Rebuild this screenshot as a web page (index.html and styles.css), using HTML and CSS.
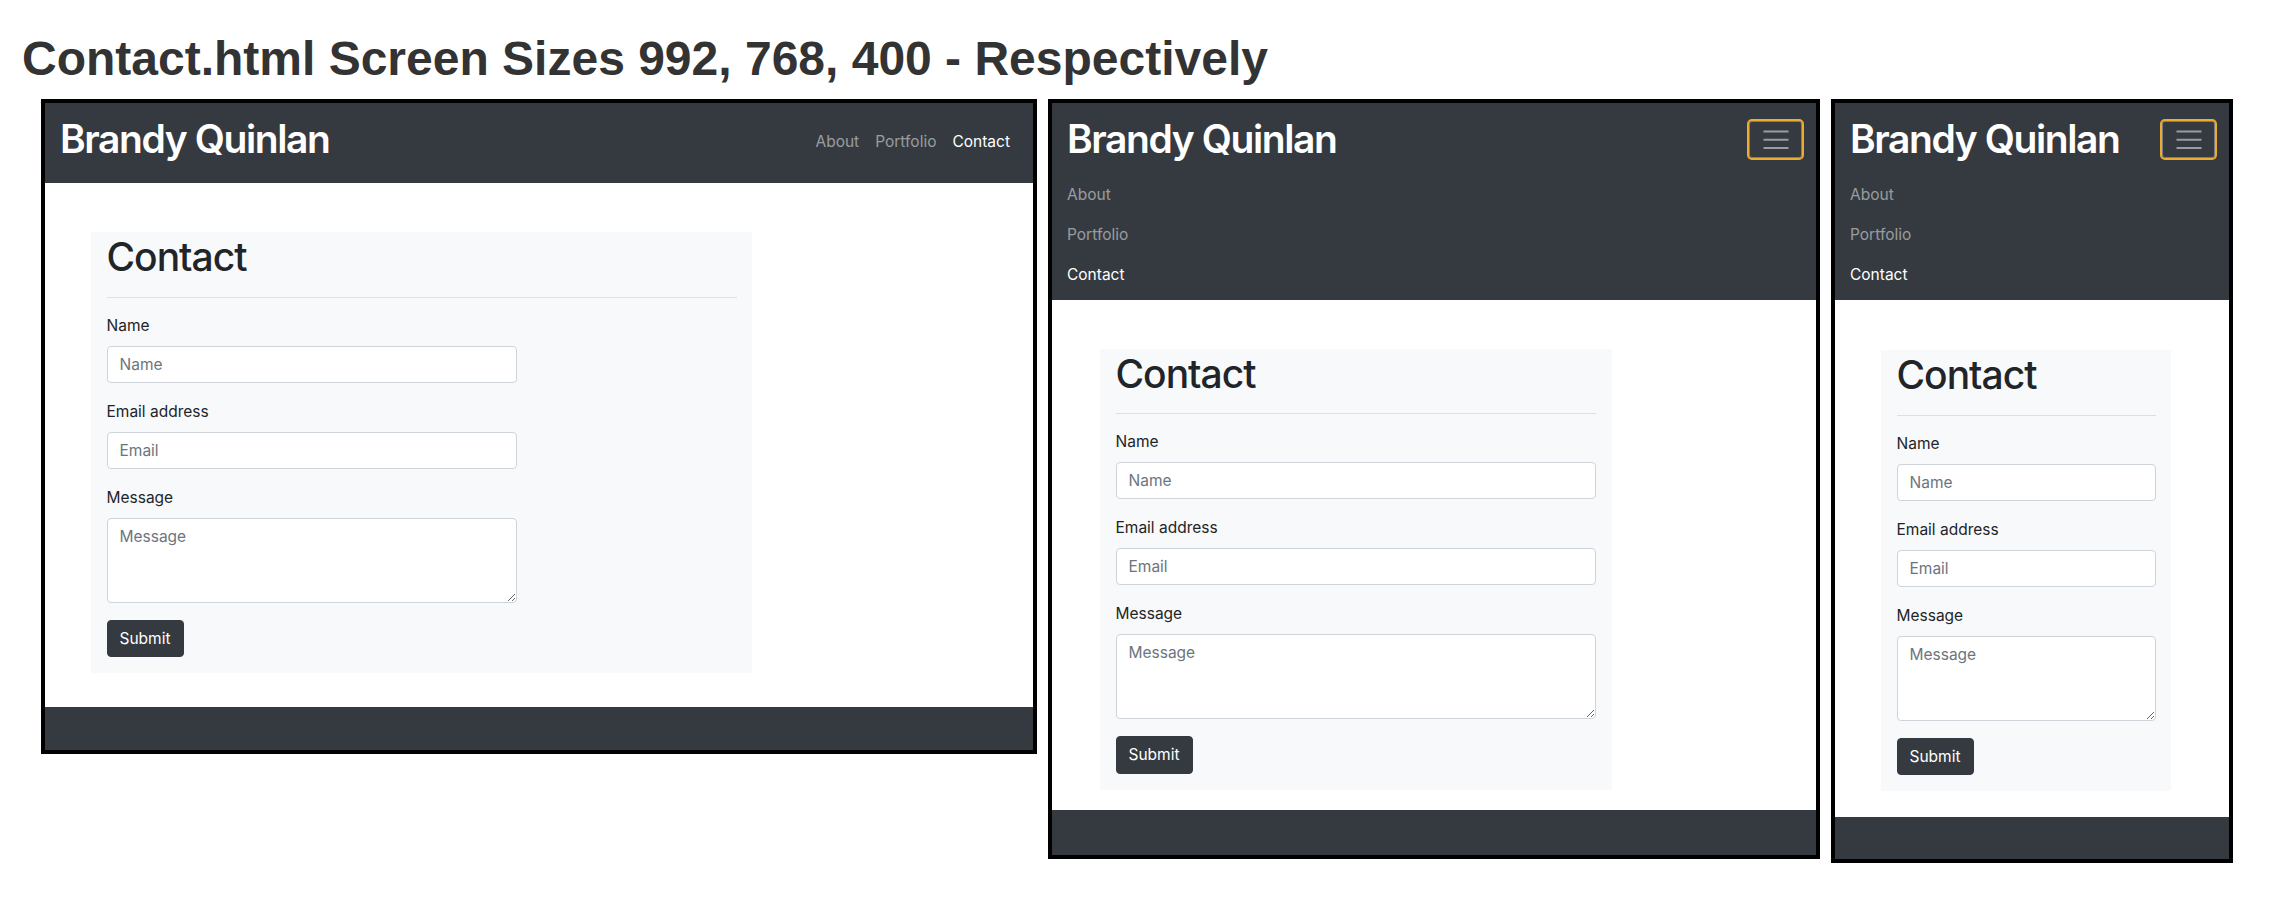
FILE: index.html
```html
<!DOCTYPE html>
<html lang="en">
<head>
<meta charset="utf-8">
<title>Contact.html Screen Sizes</title>
<link rel="stylesheet" href="styles.css">
</head>
<body>
<h1 class="page-title">Contact.html Screen Sizes 992, 768, 400 - Respectively</h1>
<div class="shots">

  <div class="shot shot-lg">
    <nav class="navbar navbar-wide">
      <a class="brand" href="#">Brandy Quinlan</a>
      <ul class="nav-row">
        <li><a class="nav-link" href="#">About</a></li>
        <li><a class="nav-link" href="#">Portfolio</a></li>
        <li><a class="nav-link active" href="#">Contact</a></li>
      </ul>
    </nav>
    <main class="page-body">
      <section class="card">
        <h2 class="card-title">Contact</h2>
        <hr class="divider">
        <form class="contact-form">
          <div class="form-group">
            <label class="form-label">Name</label>
            <input class="form-control" type="text" placeholder="Name">
          </div>
          <div class="form-group">
            <label class="form-label">Email address</label>
            <input class="form-control" type="email" placeholder="Email">
          </div>
          <div class="form-group">
            <label class="form-label">Message</label>
            <textarea class="form-control form-textarea" placeholder="Message"></textarea>
          </div>
          <button class="btn" type="button">Submit</button>
        </form>
      </section>
    </main>
    <footer class="site-footer"></footer>
  </div>

  <div class="shot shot-md">
    <nav class="navbar navbar-collapsed">
      <div class="navbar-top">
        <a class="brand" href="#">Brandy Quinlan</a>
        <button class="toggler" type="button" aria-label="Toggle navigation">
          <svg class="toggler-icon" width="26" height="20" viewBox="0 0 26 20"><path d="M0.5 1.5H25.5M0.5 9.75H25.5M0.5 18H25.5" stroke="rgba(255,255,255,0.5)" stroke-width="1.8" fill="none"/></svg>
        </button>
      </div>
      <ul class="nav-stack">
        <li><a class="nav-link" href="#">About</a></li>
        <li><a class="nav-link" href="#">Portfolio</a></li>
        <li><a class="nav-link active" href="#">Contact</a></li>
      </ul>
    </nav>
    <main class="page-body">
      <section class="card">
        <h2 class="card-title">Contact</h2>
        <hr class="divider">
        <form class="contact-form">
          <div class="form-group">
            <label class="form-label">Name</label>
            <input class="form-control" type="text" placeholder="Name">
          </div>
          <div class="form-group">
            <label class="form-label">Email address</label>
            <input class="form-control" type="email" placeholder="Email">
          </div>
          <div class="form-group">
            <label class="form-label">Message</label>
            <textarea class="form-control form-textarea" placeholder="Message"></textarea>
          </div>
          <button class="btn" type="button">Submit</button>
        </form>
      </section>
    </main>
    <footer class="site-footer"></footer>
  </div>

  <div class="shot shot-sm">
    <nav class="navbar navbar-collapsed">
      <div class="navbar-top">
        <a class="brand" href="#">Brandy Quinlan</a>
        <button class="toggler" type="button" aria-label="Toggle navigation">
          <svg class="toggler-icon" width="26" height="20" viewBox="0 0 26 20"><path d="M0.5 1.5H25.5M0.5 9.75H25.5M0.5 18H25.5" stroke="rgba(255,255,255,0.5)" stroke-width="1.8" fill="none"/></svg>
        </button>
      </div>
      <ul class="nav-stack">
        <li><a class="nav-link" href="#">About</a></li>
        <li><a class="nav-link" href="#">Portfolio</a></li>
        <li><a class="nav-link active" href="#">Contact</a></li>
      </ul>
    </nav>
    <main class="page-body">
      <section class="card">
        <h2 class="card-title">Contact</h2>
        <hr class="divider">
        <form class="contact-form">
          <div class="form-group">
            <label class="form-label">Name</label>
            <input class="form-control" type="text" placeholder="Name">
          </div>
          <div class="form-group">
            <label class="form-label">Email address</label>
            <input class="form-control" type="email" placeholder="Email">
          </div>
          <div class="form-group">
            <label class="form-label">Message</label>
            <textarea class="form-control form-textarea" placeholder="Message"></textarea>
          </div>
          <button class="btn" type="button">Submit</button>
        </form>
      </section>
    </main>
    <footer class="site-footer"></footer>
  </div>

</div>
</body>
</html>
```
FILE: styles.css
```css
* { box-sizing: border-box; }

html, body {
  margin: 0;
  background: #ffffff;
}

body {
  font-family: Inter, "Noto Sans", sans-serif;
  color: #212529;
}

.page-title {
  margin: 0 0 16px;
  padding: 35px 0 0 22px;
  font-family: "Liberation Sans", Arial, sans-serif;
  font-weight: 700;
  font-size: 48px;
  line-height: 48px;
  color: #333333;
}

.shots {
  display: flex;
  align-items: flex-start;
  gap: 11px;
  padding-left: 41px;
}

.shot {
  display: flex;
  flex-direction: column;
  border: 4px solid #000;
  background: #fff;
}

.shot-lg { width: 996px; }
.shot-md { width: 772px; }
.shot-sm { width: 402px; }

/* navbar */
.navbar {
  background: #343a40;
}

.brand {
  font-size: 39px;
  line-height: 47px;
  font-weight: 600;
  letter-spacing: -1.4px;
  color: #fff;
  text-decoration: none;
  white-space: nowrap;
}

.nav-link {
  display: block;
  font-size: 15.5px;
  line-height: 24px;
  color: rgba(255, 255, 255, 0.5);
  text-decoration: none;
}

.nav-link.active { color: #fff; }

.navbar-wide {
  display: flex;
  align-items: flex-start;
  justify-content: space-between;
  height: 80px;
  padding: 12px 15px 0 15px;
}

.nav-row {
  display: flex;
  list-style: none;
  margin: 15px 0 0;
  padding: 0;
}

.nav-row .nav-link { padding: 0 8px; }

.navbar-collapsed {
  padding: 12px 12px 5.5px 15px;
}

.navbar-top {
  display: flex;
  align-items: center;
  justify-content: space-between;
}

.toggler {
  display: flex;
  align-items: center;
  justify-content: center;
  width: 57px;
  height: 41px;
  margin-top: 2px;
  padding: 0;
  background: transparent;
  border: 2px solid #eeac2e;
  border-radius: 5px;
  box-shadow: inset 0 0 0 1px rgba(255, 255, 255, 0.35);
}

.toggler-icon { display: block; }

.nav-stack {
  list-style: none;
  margin: 12.5px 0 0;
  padding: 0;
}

.nav-stack .nav-link { padding: 8px 0; }

/* body */
.page-body { display: flex; }

.shot-lg .page-body { padding: 49px 0 34px 46px; }
.shot-md .page-body { padding: 48.5px 0 20.5px 48px; }
.shot-sm .page-body { padding: 50px 0 26px 46px; }

.card {
  background: #f8f9fa;
  padding: 2px 15.5px 16px;
}

.shot-lg .card { width: 661px; }
.shot-md .card { width: 511.5px; }
.shot-sm .card { width: 290px; }

.card-title {
  margin: 0;
  font-size: 39px;
  line-height: 46.8px;
  font-weight: 500;
  letter-spacing: -1px;
  color: #212529;
}

.divider {
  margin: 16px 0;
  border: 0;
  border-top: 1px solid rgba(0, 0, 0, 0.1);
}

.form-group { margin-bottom: 17px; }

.form-label {
  display: block;
  margin-bottom: 8px;
  font-size: 15.5px;
  line-height: 24px;
  color: #212529;
}

.form-control {
  display: block;
  width: 100%;
  height: 37px;
  margin: 0;
  padding: 6px 12px;
  font-family: inherit;
  font-size: 15.5px;
  line-height: 24px;
  color: #495057;
  background: #fff;
  border: 1px solid #ced4da;
  border-radius: 4px;
}

.shot-lg .form-control { width: 410px; }

.form-control::placeholder { color: #6c757d; opacity: 1; }

.form-textarea {
  height: 85px;
  resize: vertical;
}

.btn {
  display: block;
  height: 37.5px;
  padding: 6px 12px;
  font-family: inherit;
  font-size: 15.5px;
  line-height: 24px;
  color: #fff;
  background: #343a40;
  border: 1px solid #343a40;
  border-radius: 4px;
}

.site-footer { background: #343a40; }
.shot-lg .site-footer { height: 43px; }
.shot-md .site-footer { height: 45px; }
.shot-sm .site-footer { height: 42px; }
```
